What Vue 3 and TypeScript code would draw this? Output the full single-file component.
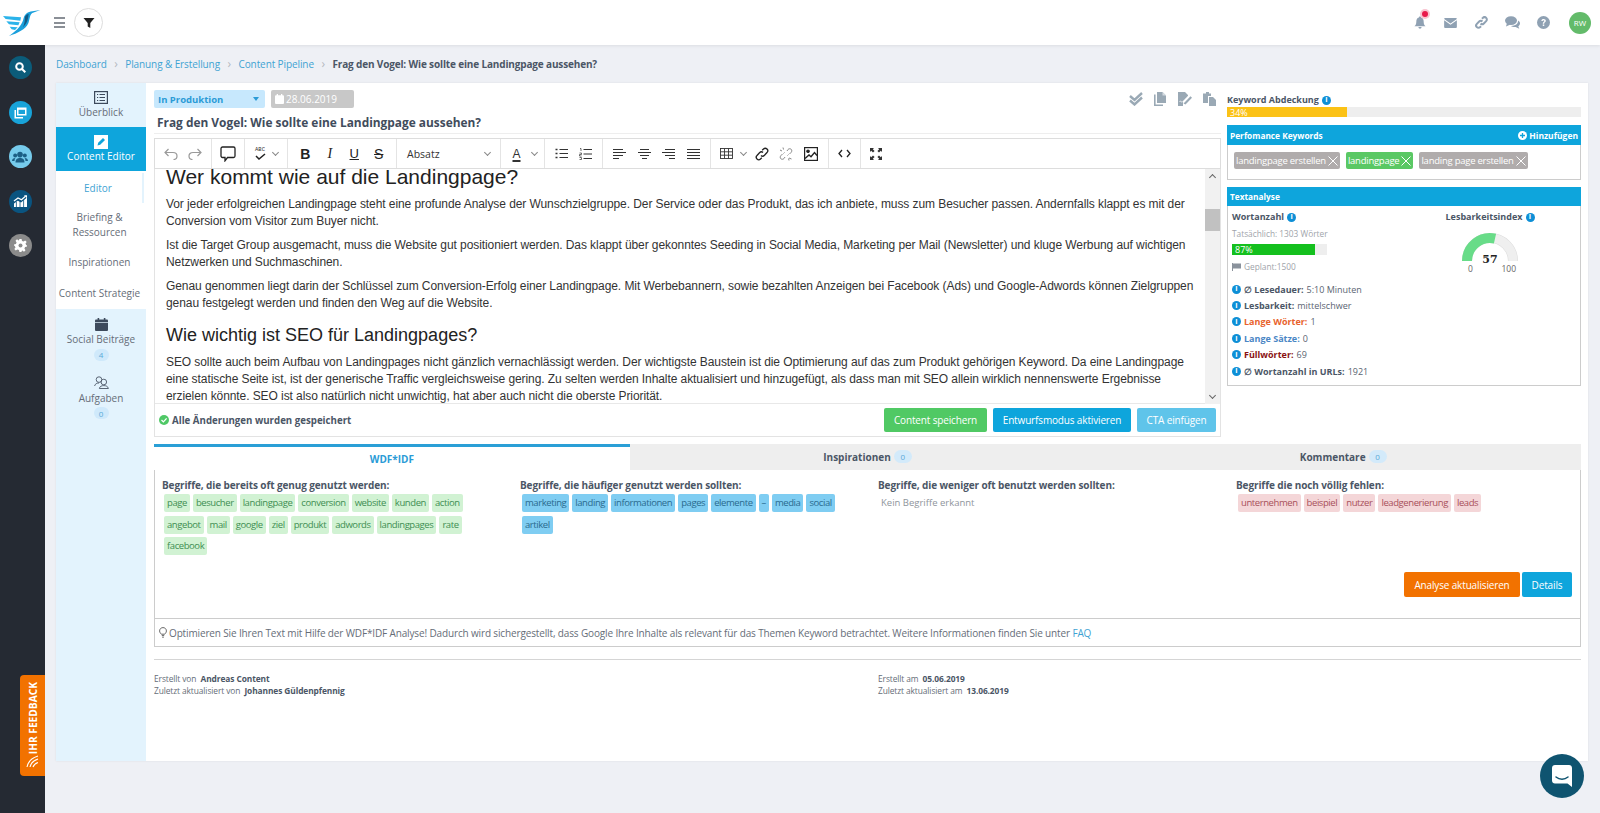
<script setup lang="ts">
const greenTags: string[] = ['page','besucher','landingpage','conversion','website','kunden','action','angebot','mail','google','ziel','produkt','adwords','landingpages','rate','facebook']
const blueTags: string[] = ['marketing','landing','informationen','pages','elemente','–','media','social','artikel']
const redTags: string[] = ['unternehmen','beispiel','nutzer','leadgenerierung','leads']
const stats = [
  { label: '∅ Lesedauer:', value: '5:10 Minuten', cls: 'st-dark' },
  { label: 'Lesbarkeit:', value: 'mittelschwer', cls: 'st-dark' },
  { label: 'Lange Wörter:', value: '1', cls: 'st-orange' },
  { label: 'Lange Sätze:', value: '0', cls: 'st-blue' },
  { label: 'Füllwörter:', value: '69', cls: 'st-red' },
  { label: '∅ Wortanzahl in URLs:', value: '1921', cls: 'st-dark' },
]
const keywords = [
  { t: 'landingpage erstellen', green: false },
  { t: 'landingpage', green: true },
  { t: 'landing page erstellen', green: false },
]
</script>

<template>
  <div class="app">
    <header class="topbar">
      <svg class="logo" width="38" height="27" viewBox="0 0 114 81">
        <path d="M112 0 L88 4 C74 6 66 12 62 24 C58 44 44 60 18 78 C44 70 68 58 76 40 C80 30 80 14 88 9 Z" fill="#1aa0dc"/>
        <path d="M0 18 L54 22 L52 32 L8 27 Z M10 34 L50 37 L46 46 L18 43 Z M20 50 L44 52 L36 60 L26 58 Z" fill="#2bb3ea"/>
        <path d="M66 20 C70 14 74 12 77 12 C75 22 76 36 60 52 C65 40 66 30 66 20 Z" fill="#135a84"/>
      </svg>
      <div class="burger"><i></i><i></i><i></i></div>
      <div class="filter-btn">
        <svg width="12" height="12" viewBox="0 0 12 12"><path d="M0.5 1 H11.5 L7.3 6 V11 L4.7 9.5 V6 Z" fill="#222"/></svg>
      </div>
      <div class="top-right">
        <div class="ti bell">
          <svg width="12" height="13" viewBox="0 0 14 15"><path d="M7 0.5 C8 .5 8.3 1.2 8.3 1.8 C10.5 2.4 11.3 4.4 11.3 6.5 C11.3 9 12 10.4 13.5 11.8 H.5 C2 10.4 2.7 9 2.7 6.5 C2.7 4.4 3.5 2.4 5.7 1.8 C5.7 1.2 6 .5 7 .5 Z M5.2 12.8 H8.8 C8.8 14 8 14.8 7 14.8 C6 14.8 5.2 14 5.2 12.8 Z" fill="#8fa1b3"/></svg>
          <span class="pulse"></span>
        </div>
        <div class="ti"><svg width="13" height="10" viewBox="0 0 14 11"><path d="M0 1 C0 .4 .4 0 1 0 H13 C13.6 0 14 .4 14 1 L7 6 Z M0 2.6 L7 7.5 L14 2.6 V10 C14 10.6 13.6 11 13 11 H1 C.4 11 0 10.6 0 10 Z" fill="#8fa1b3"/></svg></div>
        <div class="ti"><svg width="13" height="13" viewBox="0 0 14 14" fill="none" stroke="#8fa1b3" stroke-width="2.2"><path d="M6 8 C7 9 8.5 9 9.5 8 L12 5.5 C13 4.5 13 3 12 2 C11 1 9.5 1 8.5 2 L7.5 3"/><path d="M8 6 C7 5 5.5 5 4.5 6 L2 8.5 C1 9.5 1 11 2 12 C3 13 4.5 13 5.5 12 L6.5 11"/></svg></div>
        <div class="ti"><svg width="15" height="13" viewBox="0 0 15 13"><ellipse cx="6" cy="4.6" rx="6" ry="4.4" fill="#8fa1b3"/><path d="M2 7 L1 10.5 L5.5 8.5 Z" fill="#8fa1b3"/><path d="M13 4.6 C14.4 5.4 15 6.4 15 7.5 C15 8.7 14.2 9.6 13.3 10.2 L14.3 12.8 L10.6 11 C8.8 11.2 7 10.6 6 9.9 C10 10 13.4 8 13 4.6 Z" fill="#8fa1b3"/></svg></div>
        <div class="ti"><svg width="13" height="13" viewBox="0 0 14 14"><circle cx="7" cy="7" r="7" fill="#8fa1b3"/><path d="M4.7 5.3 C4.8 3.9 5.8 3.2 7.1 3.2 C8.5 3.2 9.5 4 9.5 5.2 C9.5 6.8 7.7 6.8 7.7 8.3 H6.2 C6.2 6.2 7.9 6.2 7.9 5.3 C7.9 4.8 7.5 4.5 7 4.5 C6.5 4.5 6.2 4.9 6.1 5.5 Z" fill="#fff"/><rect x="6.2" y="9.1" width="1.6" height="1.6" fill="#fff"/></svg></div>
        <div class="avatar">RW</div>
      </div>
    </header>

    <div class="below">
      <aside class="rail">
        <div class="rail-ic" style="background:#0b5c7a">
          <svg width="11" height="11" viewBox="0 0 11 11" fill="none" stroke="#fff" stroke-width="2"><circle cx="4.5" cy="4.5" r="3.3"/><path d="M7 7 L10.3 10.3"/></svg>
        </div>
        <div class="rail-ic" style="background:#18a3d9">
          <svg width="13" height="13" viewBox="0 0 13 13"><path d="M3 1.5 H12.5 V9.5 H3 Z" fill="#fff"/><rect x="4.5" y="3.8" width="6.5" height="4.2" fill="#18a3d9"/><path d="M.5 4 H2 V11 H9 V12.5 H.5 Z" fill="#fff"/></svg>
        </div>
        <div class="rail-ic" style="background:#76cbec">
          <svg width="16" height="12" viewBox="0 0 16 12" fill="#1c5f85"><circle cx="8" cy="3.6" r="2.8"/><circle cx="3.2" cy="4.4" r="2"/><circle cx="12.8" cy="4.4" r="2"/><path d="M3.5 11.5 C3.5 8 5.5 7 8 7 C10.5 7 12.5 8 12.5 11.5 Z"/><path d="M0 10 C0 8 1.3 7 3.4 7 C2.8 8 2.5 9 2.5 10 Z M16 10 C16 8 14.7 7 12.6 7 C13.2 8 13.5 9 13.5 10 Z"/></svg>
        </div>
        <div class="rail-ic" style="background:#0a5480">
          <svg width="15" height="12" viewBox="0 0 15 12" fill="#fff"><path d="M1 12 V8.5 L4.8 5.8 L8 7.5 L11 5 L14 2.5 V12 Z"/><path d="M1 6 L5 3 L8.5 4.8 L12.5 1.3" fill="none" stroke="#fff" stroke-width="1.3"/><path d="M11 .3 H14 V3.3 Z"/><path d="M3.4 7 V12 M7 6 V12 M10.6 5 V12" stroke="#0a5480" stroke-width=".8"/></svg>
        </div>
        <div class="rail-ic" style="background:#8b8b8b">
          <svg width="13" height="13" viewBox="0 0 13 13"><path d="M5.4 0 H7.6 L8 1.9 L9.6 2.6 L11.2 1.5 L12.7 3 L11.5 4.6 L12.2 6 L13 6.4 V7.6 L11.1 8.1 L10.4 9.6 L11.5 11.2 L10 12.7 L8.4 11.5 L7.6 11.9 V13 H5.4 L5 11.1 L3.4 10.4 L1.8 11.5 L.3 10 L1.5 8.4 L.8 7 L0 6.6 V5.4 L1.9 5 L2.6 3.4 L1.5 1.8 L3 .3 L4.6 1.5 L5 1.3 Z" fill="#fff"/><circle cx="6.5" cy="6.5" r="2" fill="#8b8b8b"/></svg>
        </div>
        <div class="feedback">
          <span class="fb-text">IHR FEEDBACK</span>
          <svg class="fb-ic" width="13" height="13" viewBox="0 0 13 13" fill="none" stroke="#fff" stroke-width="1.1"><path d="M1 12 C2 7 5 3 12 1"/><path d="M4 12 C4.5 9 6.5 6 12 4"/><path d="M7 12 C7.5 10.5 9 8.5 12 7.5"/></svg>
        </div>
      </aside>

      <main class="main">
        <nav class="crumbs">
          <a>Dashboard</a><span class="sep">›</span>
          <a>Planung &amp; Erstellung</a><span class="sep">›</span>
          <a>Content Pipeline</a><span class="sep">›</span>
          <b>Frag den Vogel: Wie sollte eine Landingpage aussehen?</b>
        </nav>

        <section class="card">
          <div class="side">
            <div class="side-item tint ov">
              <svg width="14" height="13" viewBox="0 0 14 13" fill="none" stroke="#3d4a5c" stroke-width="1.2"><rect x=".6" y=".6" width="12.8" height="11.8"/><path d="M3 3.5 H4.2 M5.5 3.5 H11 M3 6.5 H4.2 M5.5 6.5 H11 M3 9.5 H4.2 M5.5 9.5 H11"/></svg>
              <span>Überblick</span>
            </div>
            <div class="side-item active">
              <svg width="14" height="14" viewBox="0 0 14 14"><rect width="14" height="14" fill="#fff"/><path d="M3.5 10.5 L4.2 7.8 L9 3 L11 5 L6.2 9.8 Z" fill="#0ea5dc"/></svg>
              <span>Content Editor</span>
            </div>
            <div class="sub">
              <div class="sub-i cur">Editor</div>
              <div class="sub-i two">Briefing &amp;<br>Ressourcen</div>
              <div class="sub-i insp">Inspirationen</div>
              <div class="sub-i strat">Content Strategie</div>
            </div>
            <div class="side-rest">
              <div class="side-item soc">
                <svg width="13" height="13" viewBox="0 0 13 13" fill="#3d4a5c"><rect x="0" y="1.5" width="13" height="11.5" rx="1"/><rect x="2.6" y="0" width="1.6" height="3"/><rect x="8.8" y="0" width="1.6" height="3"/><rect x="0" y="4" width="13" height=".7" fill="#e3f3fd"/></svg>
                <span>Social Beiträge</span>
                <em class="pill">4</em>
              </div>
              <div class="side-item soc tasks">
                <svg width="15" height="13" viewBox="0 0 15 13" fill="none" stroke="#4b5666" stroke-width=".9"><circle cx="5" cy="3.6" r="2.8"/><path d="M.6 10 C1 7.8 3 7 5 7"/><circle cx="9.8" cy="6" r="2.8"/><path d="M5.4 12.5 C5.6 10.4 7.6 9.6 9.8 9.6 C12 9.6 14 10.4 14.4 12.5 Z"/></svg>
                <span>Aufgaben</span>
                <em class="pill">0</em>
              </div>
            </div>
          </div>

          <div class="body">
            <div class="top-grid">
              <div class="ed-col">
                <div class="status-row">
                  <div class="status">In Produktion<i class="caret"></i></div>
                  <div class="date">
                    <svg width="9" height="10" viewBox="0 0 9 10" fill="#fff"><rect y="1.2" width="9" height="8.8" rx="1"/><rect x="1.7" width="1.3" height="2"/><rect x="6" width="1.3" height="2"/></svg>
                    28.06.2019
                  </div>
                  <div class="actions">
                    <svg width="16" height="14" viewBox="0 0 16 14" fill="none" stroke="#9aa9b5" stroke-width="2.4"><path d="M2 4 L6.5 8 L14 1"/><path d="M2 8.5 L6.5 12.5 L14 5.5"/></svg>
                    <svg width="13" height="14" viewBox="0 0 13 14" fill="#9aa9b5"><path d="M3 0 H8.5 L12 3.5 V11 H3 Z"/><path d="M1.6 2.5 V12.4 H9 V14 H0 V2.5 Z"/><path d="M8.5 0 V3.5 H12 Z" fill="#d5dce2"/></svg>
                    <svg width="16" height="14" viewBox="0 0 16 14"><path d="M1 0 H8 L11 3 V6 L6 11 V14 H1 Z" fill="#9aa9b5"/><path d="M6.5 11 L13.5 3.8" stroke="#fff" stroke-width="3.4"/><path d="M6.5 11.5 L13.5 4.3 L15 5.8 L8.5 12.5 Z" fill="#9aa9b5"/><path d="M2.5 9.5 C3.5 8 4 11 5 9.5" stroke="#fff" fill="none" stroke-width=".8"/></svg>
                    <svg width="13" height="14" viewBox="0 0 13 14" fill="#9aa9b5"><path d="M0 1.5 H3 V0 H6 V1.5 H8 V4 H5 V11 H0 Z"/><path d="M6 5 H10 L13 8 V14 H6 Z"/></svg>
                  </div>
                </div>
                <h1 class="title">Frag den Vogel: Wie sollte eine Landingpage aussehen?</h1>
                <div class="editor-box">
                  <div class="toolbar">
                    <div class="grp" style="width:57px">
                      <button class="tb"><svg width="14" height="12" viewBox="0 0 14 12" fill="none" stroke="#9a9a9a" stroke-width="1.2"><path d="M4.5 1 L1 4.5 L4.5 8"/><path d="M1 4.5 H9 C11.5 4.5 13 6 13 8 C13 10 11.5 11.5 9.5 11.5"/></svg></button>
                      <button class="tb"><svg width="14" height="12" viewBox="0 0 14 12" fill="none" stroke="#9a9a9a" stroke-width="1.2"><path d="M9.5 1 L13 4.5 L9.5 8"/><path d="M13 4.5 H5 C2.5 4.5 1 6 1 8 C1 10 2.5 11.5 4.5 11.5"/></svg></button>
                    </div>
                    <div class="grp" style="width:33px">
                      <button class="tb"><svg width="16" height="16" viewBox="0 0 16 16" fill="none" stroke="#222" stroke-width="1.3"><path d="M2.5 1 H13.5 C14.3 1 15 1.7 15 2.5 V10 C15 10.8 14.3 11.5 13.5 11.5 H7.5 L5 14.8 V11.5 H2.5 C1.7 11.5 1 10.8 1 10 V2.5 C1 1.7 1.7 1 2.5 1 Z"/></svg></button>
                    </div>
                    <div class="grp" style="width:43px">
                      <button class="tb spell"><span>ABC</span><svg width="11" height="7" viewBox="0 0 11 7" fill="none" stroke="#222" stroke-width="1.5"><path d="M1 3 L4 6 L10 1"/></svg></button>
                      <i class="chev"></i>
                    </div>
                    <div class="grp" style="width:109px">
                      <button class="tb fm b">B</button><button class="tb fm it">I</button><button class="tb fm u">U</button><button class="tb fm s">S</button>
                    </div>
                    <div class="grp absatz" style="width:104px"><span>Absatz</span><i class="chev"></i></div>
                    <div class="grp" style="width:44px">
                      <button class="tb fm acol">A</button><i class="chev"></i>
                    </div>
                    <div class="grp" style="width:58px">
                      <button class="tb"><svg width="13" height="11" viewBox="0 0 13 11" stroke="#333" stroke-width="1.1"><path d="M4.5 1.5 H13 M4.5 5.5 H13 M4.5 9.5 H13"/><path d="M.5 1.5 H2.5 M.5 5.5 H2.5 M.5 9.5 H2.5" stroke-width="1.6"/></svg></button>
                      <button class="tb"><svg width="13" height="12" viewBox="0 0 13 12" stroke="#333" stroke-width="1.1"><path d="M4.5 1.5 H13 M4.5 6 H13 M4.5 10.5 H13"/><path d="M1 .5 H2 V3 M.5 5 H2.5 V6.5 H.5 V8 H2.5 M.5 9.5 H2.5 V11.5 H.5" fill="none" stroke-width=".7"/></svg></button>
                    </div>
                    <div class="grp" style="width:107.5px">
                      <button class="tb" v-for="(a,i) in ['M0 1.5H10M0 4.5H13M0 7.5H10M0 10.5H6','M2 1.5H11M0 4.5H13M2 7.5H11M4 10.5H9','M3 1.5H13M0 4.5H13M3 7.5H13M7 10.5H13','M0 1.5H13M0 4.5H13M0 7.5H13M0 10.5H13']" :key="i"><svg width="13" height="12" viewBox="0 0 13 12" stroke="#333" stroke-width="1.2"><path :d="a"/></svg></button>
                    </div>
                    <div class="grp" style="width:118.5px">
                      <button class="tb narrow"><svg width="13" height="11" viewBox="0 0 13 11" fill="none" stroke="#333" stroke-width=".9"><rect x=".5" y=".5" width="12" height="10"/><path d="M.5 3.8 H12.5 M.5 7.2 H12.5 M4.5 .5 V10.5 M8.5 .5 V10.5"/></svg></button>
                      <i class="chev"></i>
                      <button class="tb"><svg width="14" height="14" viewBox="0 0 14 14" fill="none" stroke="#222" stroke-width="1.3"><path d="M6 8.5 C7 9.5 8.5 9.3 9.5 8.3 L12 5.5 C13 4.5 13 3 12 2 C11 1 9.5 1 8.5 2 L7.2 3.3"/><path d="M8 5.5 C7 4.5 5.5 4.7 4.5 5.7 L2 8.5 C1 9.5 1 11 2 12 C3 13 4.5 13 5.5 12 L6.8 10.7"/></svg></button>
                      <button class="tb"><svg width="14" height="14" viewBox="0 0 14 14" fill="none" stroke="#888" stroke-width="1"><path d="M8 4 L9 2.5 C10 1.5 11.3 1.5 12.2 2.3 C13 3.2 13 4.5 12 5.5 L10.5 7"/><path d="M6 10 L5 11.5 C4 12.5 2.7 12.5 1.8 11.7 C1 10.8 1 9.5 2 8.5 L3.5 7"/><path d="M5.5 5.5 L4.5 6.5 M8.5 8.5 L9.5 7.5 M1 3 L3 4 M4 .5 L4.5 2.5 M10 11 L12.5 12 M9.5 11.5 L10 13.5"/></svg></button>
                      <button class="tb"><svg width="14" height="14" viewBox="0 0 14 14" fill="none" stroke="#222" stroke-width="1.2"><rect x=".6" y=".6" width="12.8" height="12.8"/><circle cx="4" cy="4.2" r="1.2" fill="#222"/><path d="M1 11.5 L5 8 L7 9.8 L10.5 5.5 L13 8.5" stroke-width="1.4"/></svg></button>
                    </div>
                    <div class="grp" style="width:32px">
                      <button class="tb"><svg width="13" height="9" viewBox="0 0 13 9" fill="none" stroke="#222" stroke-width="1.3"><path d="M4 1 L1 4.5 L4 8"/><path d="M9 1 L12 4.5 L9 8"/></svg></button>
                    </div>
                    <div class="grp last">
                      <button class="tb"><svg width="12" height="12" viewBox="0 0 12 12" fill="#333"><path d="M0 0 H4 L2.8 1.2 L4.6 3 L3 4.6 L1.2 2.8 L0 4 Z M12 0 V4 L10.8 2.8 L9 4.6 L7.4 3 L9.2 1.2 L8 0 Z M0 12 V8 L1.2 9.2 L3 7.4 L4.6 9 L2.8 10.8 L4 12 Z M12 12 H8 L9.2 10.8 L7.4 9 L9 7.4 L10.8 9.2 L12 8 Z"/></svg></button>
                    </div>
                  </div>
                  <div class="doc-wrap">
                    <div class="doc">
                      <h2 class="h-a">Wer kommt wie auf die Landingpage?</h2>
                      <p>Vor jeder erfolgreichen Landingpage steht eine profunde Analyse der Wunschzielgruppe. Der Service oder das Produkt, das ich anbiete, muss zum Besucher passen. Andernfalls klappt es mit der Conversion vom Visitor zum Buyer nicht.</p>
                      <p>Ist die Target Group ausgemacht, muss die Website gut positioniert werden. Das klappt über gekonntes Seeding in Social Media, Marketing per Mail (Newsletter) und kluge Werbung auf wichtigen Netzwerken und Suchmaschinen.</p>
                      <p>Genau genommen liegt darin der Schlüssel zum Conversion-Erfolg einer Landingpage. Mit Werbebannern, sowie bezahlten Anzeigen bei Facebook (Ads) und Google-Adwords können Zielgruppen genau festgelegt werden und finden den Weg auf die Website.</p>
                      <h3 class="h-b">Wie wichtig ist SEO für Landingpages?</h3>
                      <p>SEO sollte auch beim Aufbau von Landingpages nicht gänzlich vernachlässigt werden. Der wichtigste Baustein ist die Optimierung auf das zum Produkt gehörigen Keyword. Da eine Landingpage eine statische Seite ist, ist der generische Traffic vergleichsweise gering. Zu selten werden Inhalte aktualisiert und hinzugefügt, als dass man mit SEO allein wirklich nennenswerte Ergebnisse erzielen könnte. SEO ist also natürlich nicht unwichtig, hat aber auch nicht die oberste Priorität.</p>
                    </div>
                    <div class="scroll">
                      <i class="sb-up"></i><div class="thumb"></div><i class="sb-down"></i>
                    </div>
                  </div>
                  <div class="save-row">
                    <span class="saved">
                      <svg width="10" height="10" viewBox="0 0 10 10"><circle cx="5" cy="5" r="5" fill="#4fc866"/><path d="M2.5 5 L4.4 6.9 L7.6 3.4" fill="none" stroke="#fff" stroke-width="1.3"/></svg>
                      Alle Änderungen wurden gespeichert
                    </span>
                    <button class="btn b-green">Content speichern</button>
                    <button class="btn b-blue">Entwurfsmodus aktivieren</button>
                    <button class="btn b-light">CTA einfügen</button>
                  </div>
                </div>
              </div>

              <div class="right-col">
                <div class="lab">Keyword Abdeckung <i class="info">i</i></div>
                <div class="bar big"><div class="fill yellow">34%</div></div>
                <div class="box perf">
                  <div class="box-h"><span>Perfomance Keywords</span><span class="add"><svg width="9" height="9" viewBox="0 0 9 9"><circle cx="4.5" cy="4.5" r="4.5" fill="#fff"/><path d="M4.5 2 V7 M2 4.5 H7" stroke="#0ea5dc" stroke-width="1.3"/></svg> Hinzufügen</span></div>
                  <div class="kw-row">
                    <span v-for="k in keywords" :key="k.t" class="kw" :class="{ on: k.green }">{{ k.t }}<svg width="10" height="10" viewBox="0 0 10 10" stroke="#fff" stroke-width="1"><path d="M.5 .5 L9.5 9.5 M9.5 .5 L.5 9.5"/></svg></span>
                  </div>
                </div>
                <div class="box ta">
                  <div class="box-h tall"><span>Textanalyse</span></div>
                  <div class="ta-body">
                    <div class="ta-cols">
                      <div>
                        <div class="lab small">Wortanzahl <i class="info">i</i></div>
                        <div class="muted t1">Tatsächlich: 1303 Wörter</div>
                        <div class="bar words"><div class="fill lime">87%</div></div>
                        <div class="muted planned">
                          <svg width="9" height="8" viewBox="0 0 9 8" fill="#8a929c"><path d="M0 0 H1 V8 H0 Z M1 .5 H9 V5.5 H1 Z"/></svg>
                          Geplant:1500
                        </div>
                      </div>
                      <div class="gauge-col">
                        <div class="lab small">Lesbarkeitsindex <i class="info">i</i></div>
                        <svg class="gauge" width="60" height="36" viewBox="0 0 60 36">
                          <path d="M7 29 A23 23 0 0 1 53 29" fill="none" stroke="#dcdcdc" stroke-width="10"/>
                          <path d="M7 29 A23 23 0 0 1 53 29" fill="none" stroke="#efefef" stroke-width="9"/>
                          <path d="M7 29 A23 23 0 0 1 35 6.6" fill="none" stroke="#68dc88" stroke-width="10"/>
                          <text x="30" y="30.5" text-anchor="middle" class="g-num">57</text>
                        </svg>
                        <div class="g-scale"><span>0</span><span>100</span></div>
                      </div>
                    </div>
                    <ul class="stats">
                      <li v-for="s in stats" :key="s.label"><i class="info">i</i><b :class="s.cls">{{ s.label }}</b> {{ s.value }}</li>
                    </ul>
                  </div>
                </div>
              </div>
            </div>

            <div class="tabs">
              <div class="tab on">WDF*IDF</div>
              <div class="tab">Inspirationen <em class="pill">0</em></div>
              <div class="tab">Kommentare <em class="pill">0</em></div>
            </div>
            <div class="panel">
              <div class="panel-main">
                <div class="cols">
                  <div class="col">
                    <h4>Begriffe, die bereits oft genug genutzt werden:</h4>
                    <div class="tags"><span v-for="t in greenTags" :key="t" class="tag g">{{ t }}</span></div>
                  </div>
                  <div class="col">
                    <h4>Begriffe, die häufiger genutzt werden sollten:</h4>
                    <div class="tags"><span v-for="t in blueTags" :key="t" class="tag bl">{{ t }}</span></div>
                  </div>
                  <div class="col">
                    <h4>Begriffe, die weniger oft benutzt werden sollten:</h4>
                    <div class="none">Kein Begriffe erkannt</div>
                  </div>
                  <div class="col">
                    <h4>Begriffe die noch völlig fehlen:</h4>
                    <div class="tags"><span v-for="t in redTags" :key="t" class="tag r">{{ t }}</span></div>
                  </div>
                </div>
                <div class="panel-btns">
                  <button class="btn b-orange">Analyse aktualisieren</button>
                  <button class="btn b-blue">Details</button>
                </div>
              </div>
              <div class="hint">
                <svg width="8" height="11" viewBox="0 0 8 11" fill="none" stroke="#555" stroke-width=".9"><path d="M2.3 7.2 C1.5 6.2 .6 5.4 .6 3.9 C.6 2 2.1 .6 4 .6 C5.9 .6 7.4 2 7.4 3.9 C7.4 5.4 6.5 6.2 5.7 7.2 Z"/><path d="M2.8 8.6 H5.2 M3.2 10.2 H4.8"/></svg>
                <span>Optimieren Sie Ihren Text mit Hilfe der WDF*IDF Analyse! Dadurch wird sichergestellt, dass Google Ihre Inhalte als relevant für das Themen Keyword betrachtet. Weitere Informationen finden Sie unter <a>FAQ</a></span>
              </div>
            </div>
            <div class="credits">
              <div>Erstellt von&nbsp; <b>Andreas Content</b><br>Zuletzt aktualisiert von&nbsp; <b>Johannes Güldenpfennig</b></div>
              <div>Erstellt am&nbsp; <b>05.06.2019</b><br>Zuletzt aktualisiert am&nbsp; <b>13.06.2019</b></div>
            </div>
          </div>
        </section>
      </main>
    </div>

    <div class="chat">
      <svg width="20" height="22" viewBox="0 0 20 22"><path d="M3 0 H17 C18.7 0 20 1.3 20 3 V22 L15.5 18.5 H3 C1.3 18.5 0 17.2 0 15.5 V3 C0 1.3 1.3 0 3 0 Z" fill="#fff"/><path d="M4 12 C7.5 15 12.5 15 16 12" fill="none" stroke="#0f5470" stroke-width="1.5" stroke-linecap="round"/></svg>
    </div>
  </div>
</template>

<style>
html, body { margin: 0; background: #eef0f5; overflow: hidden; }
</style>

<style scoped>
* { box-sizing: border-box; }
.app { width: 1600px; height: 813px; display: flex; flex-direction: column; position: relative; font-family: "Open Sans", sans-serif; color: #4b5666; font-size: 10px; }
.topbar { height: 45px; background: #fff; display: flex; align-items: center; padding-left: 3px; box-shadow: 0 1px 3px rgba(0,0,0,.08); position: relative; z-index: 2; flex: none; }
.logo { flex: none; margin-top: 2px; }
.burger { display: flex; flex-direction: column; gap: 2.5px; width: 11px; margin-left: 13px; }
.burger i { height: 2px; background: #8a8f96; display: block; }
.filter-btn { width: 29px; height: 29px; border: 1px solid #ddd; border-radius: 50%; display: flex; align-items: center; justify-content: center; margin-left: 9px; }
.top-right { margin-left: auto; display: flex; align-items: center; padding-right: 9px; }
.ti { width: 31px; display: flex; justify-content: center; position: relative; }
.pulse { position: absolute; left: 17.5px; top: -5px; width: 6px; height: 6px; border-radius: 50%; background: #e8194b; box-shadow: 0 0 0 2px #f9c4d0; }
.avatar { width: 22px; height: 22px; border-radius: 50%; background: #63bb6a; color: #fff; font-size: 8px; display: flex; align-items: center; justify-content: center; margin-left: 10px; }

.below { flex: 1; display: flex; min-height: 0; }
.rail { width: 45px; background: #252a33; flex: none; display: flex; flex-direction: column; align-items: flex-start; padding: 11px 0 0 8.5px; gap: 21.5px; position: relative; }
.rail-ic { width: 23px; height: 23px; border-radius: 50%; display: flex; align-items: center; justify-content: center; }
.feedback { position: absolute; left: 20px; top: 630px; width: 25px; height: 101px; background: #f27200; border-radius: 4px 0 0 4px; display: flex; flex-direction: column; align-items: center; justify-content: flex-end; padding-bottom: 8px; gap: 1px; }
.fb-text { writing-mode: vertical-rl; transform: rotate(180deg); color: #fff; font-weight: 700; font-size: 10.2px; white-space: nowrap; }
.fb-ic { flex: none; }

.main { flex: 1; padding-left: 11px; padding-right: 12px; min-width: 0; }
.crumbs { height: 38px; display: flex; align-items: center; font-size: 10px; color: #3ca1d1; letter-spacing: -.1px; }
.crumbs a { color: #3fa3d3; }
.crumbs b { color: #4b5666; font-weight: 700; font-size: 10px; letter-spacing: -.15px; }
.sep { color: #b5b9bf; margin: 0 7.5px; font-size: 12px; line-height: 1; }
.card { height: 678px; background: #fff; display: flex; box-shadow: 0 0 2px rgba(0,0,0,.08); }
.side { width: 90px; flex: none; display: flex; flex-direction: column; text-align: center; color: #666d78; font-size: 10px; }
.side-item { display: flex; flex-direction: column; align-items: center; }
.side-item span { line-height: 14px; }
.tint { background: #e3f3fd; }
.ov { height: 44px; padding-top: 8px; gap: 1px; }
.active { height: 44px; background: #0ea5dc; color: #fff; padding-top: 8px; gap: 0; }
.sub { height: 138px; position: relative; padding-top: 2px; }
.sub-i { display: flex; align-items: center; justify-content: center; line-height: 15px; padding-right: 3px; font-size: 10px; }
.sub-i.cur { color: #3fa3d3; height: 30px; border-right: 2px solid #e3f3fd; margin-right: 2px; padding-right: 2px; }
.sub-i.two { height: 44px; }
.sub-i.insp { height: 30px; }
.sub-i.strat { height: 32px; }
.side-rest { flex: 1; background: #e3f3fd; padding-top: 8.5px; }
.soc { padding-bottom: 15.5px; gap: 1.5px; }
.tasks { padding-bottom: 0; }
.pill { display: inline-flex; align-items: center; justify-content: center; width: 15px; height: 12px; border-radius: 8px; background: #cfe9fb; color: #5aa9d8; font-size: 8px; font-style: normal; font-weight: 400; margin-top: 1px; }

.body { flex: 1; min-width: 0; padding: 7px 7px 0 8px; display: flex; flex-direction: column; }
.top-grid { display: flex; gap: 6px; height: 348px; flex: none; }
.ed-col { width: 1067px; flex: none; display: flex; flex-direction: column; }
.status-row { height: 18px; display: flex; align-items: center; gap: 6px; }
.status { width: 111px; height: 18px; background: #c7e8fd; border-radius: 2px; color: #2b9bd6; font-weight: 700; font-size: 9.5px; display: flex; align-items: center; padding-left: 4px; position: relative; }
.caret { position: absolute; right: 6px; top: 7px; border: 3.5px solid transparent; border-top: 4px solid #2b9bd6; }
.date { width: 83px; height: 18px; background: #c8c8c8; border-radius: 2px; color: #fff; font-size: 10px; display: flex; align-items: center; gap: 2px; padding-left: 4px; }
.actions { margin-left: auto; display: flex; align-items: center; gap: 10px; padding-right: 5px; }
.title { margin: 0; height: 26px; line-height: 28px; font-size: 11.9px; font-weight: 700; color: #414c5c; padding-left: 3px; border-bottom: 1px solid #eee; }
.editor-box { margin-top: 4px; border: 1px solid #e3e3e3; border-top: none; height: 299px; display: flex; flex-direction: column; }
.toolbar { height: 31px; flex: none; display: flex; border: 1px solid #ddd; border-width: 1px 0; margin-left: -1px; margin-right: -1px; border-left: 1px solid #ddd; border-right: 1px solid #ddd; }
.grp { display: flex; align-items: center; justify-content: center; border-right: 1px solid #e4e4e4; flex: none; padding: 0 2px; }
.grp.last { border-right: none; padding-left: 3px; }
.tb { width: 24.5px; height: 24px; padding: 0; border: none; background: none; display: flex; align-items: center; justify-content: center; font-family: "Liberation Sans", sans-serif; color: #222; flex: none; }
.tb.narrow { width: 22px; }
.spell { flex-direction: column; gap: 0; width: 20px; }
.spell span { font-size: 5.5px; line-height: 6px; font-family: "Liberation Mono", monospace; color: #333; }
.chev { width: 5px; height: 5px; border-right: 1px solid #888; border-bottom: 1px solid #888; transform: rotate(45deg); margin: -2px 4px 0 3px; flex: none; display: block; }
.fm { font-size: 14px; }
.fm.b { font-weight: 700; }
.fm.it { font-style: italic; font-family: "Liberation Serif", serif; }
.fm.u { text-decoration: underline; font-size: 13px; }
.fm.s { text-decoration: line-through; }
.fm.acol { font-size: 12px; text-decoration: underline; text-decoration-thickness: 2px; text-underline-offset: 2px; color: #333; }
.absatz { justify-content: space-between; font-size: 10.5px; color: #333; padding: 0 6px 0 10px; }
.doc-wrap { height: 235px; flex: none; display: flex; overflow: hidden; }
.doc { flex: 1; overflow: hidden; padding: 0 10px 0 11px; font-family: "Liberation Sans", Arial, sans-serif; font-size: 12px; line-height: 17px; letter-spacing: -.08px; color: #333; }
.doc p { margin: 0 0 7px; }
.h-a { font-weight: 400; font-size: 21px; line-height: 16px; letter-spacing: 0; color: #222; margin: 0 0 11px; }
.h-b { font-weight: 400; font-size: 18px; line-height: 24px; letter-spacing: 0; color: #222; margin: 10.5px 0 7.5px; }
.scroll { width: 15px; flex: none; background: #f1f1f1; display: flex; flex-direction: column; align-items: center; position: relative; }
.thumb { position: absolute; top: 40px; left: 0; width: 15px; height: 22px; background: #c1c1c1; }
.sb-up, .sb-down { position: absolute; left: 5px; width: 5px; height: 5px; border-left: 1px solid #666; border-top: 1px solid #666; transform: rotate(45deg); }
.sb-up { top: 6px; }
.sb-down { bottom: 6px; transform: rotate(225deg); }
.save-row { flex: 1; display: flex; align-items: center; padding-right: 4px; gap: 6px; margin-top: -1px; border-top: 1px solid #e8e8e8; }
.saved { margin-right: auto; font-weight: 700; font-size: 9.7px; padding-left: 4px; display: flex; align-items: center; gap: 3px; color: #4b5666; }
.btn { border: none; color: #fff; border-radius: 2px; font-family: "Open Sans", sans-serif; font-size: 10px; height: 24px; padding: 0; letter-spacing: -.15px; }
.b-green { width: 103px; background: #50c964; }
.b-blue { width: 138px; background: #0ea5dc; }
.b-light { width: 79px; background: #5fc4ea; }
.b-orange { width: 116px; height: 25px; background: #f27200; }
.panel-btns .b-blue { width: 50px; height: 25px; }

.right-col { width: 354px; flex: none; }
.lab { font-weight: 700; font-size: 9px; color: #4b5666; height: 14px; line-height: 14px; padding-top: 3px; box-sizing: content-box; display: flex; align-items: center; gap: 3px; }
.info { display: inline-flex; width: 9px; height: 9px; border-radius: 50%; background: #0e8fd6; color: #fff; font-size: 7.5px; font-style: normal; font-weight: 700; align-items: center; justify-content: center; line-height: 1; flex: none; }
.bar { background: #eee; }
.bar.big { height: 10px; }
.fill { height: 100%; color: #fff; font-size: 9px; line-height: 11px; padding-left: 3px; }
.yellow { width: 34%; background: #fbc216; }
.lime { width: 87%; background: #14c01e; }
.box { border: 1px solid #ccc; border-top: none; }
.perf { margin-top: 8px; height: 55px; }
.box-h { height: 20px; margin: 0 -1px; background: #0ea5dc; color: #fff; font-weight: 700; font-size: 8.3px; display: flex; align-items: center; justify-content: space-between; padding: 0 3px; }
.box-h.tall { height: 19px; }
.add { display: inline-flex; align-items: center; gap: 2px; font-size: 8.5px; }
.kw-row { display: flex; gap: 6px; padding: 7px 6px; }
.kw { height: 17px; background: #b0acac; color: #fff; border-radius: 2px; font-size: 9.5px; letter-spacing: -.25px; display: inline-flex; align-items: center; gap: 2px; padding: 0 2px; white-space: nowrap; }
.kw.on { background: #5ac864; }
.ta { margin-top: 7px; height: 199px; }
.ta-body { padding: 3px 4px 0 4px; }
.ta-cols { display: grid; grid-template-columns: 173px 170px; height: 71px; }
.lab.small { padding-top: 0; height: 16px; line-height: 16px; font-size: 9px; }
.muted { color: #a0a4aa; font-size: 8.3px; }
.t1 { margin-top: 3px; height: 12px; line-height: 12px; }
.bar.words { width: 95px; height: 11px; margin-top: 4px; }
.bar.words .fill { line-height: 11px; }
.planned { margin-top: 6px; display: flex; align-items: center; gap: 3px; }
.gauge-col { display: flex; flex-direction: column; align-items: center; }
.gauge-col .lab { justify-content: center; }
.gauge { margin-top: 7px; display: block; }
.g-num { font-family: "DejaVu Serif", serif; font-size: 11px; font-weight: 700; fill: #222; }
.g-scale { width: 48px; display: flex; justify-content: space-between; font-size: 8.5px; color: #666; margin-top: -4px; margin-left: 4px; line-height: 10px; }
.stats { list-style: none; margin: 1px 0 0; padding: 0; font-size: 9px; color: #5a6472; }
.stats li { height: 16.4px; display: flex; align-items: center; gap: 3px; white-space: nowrap; }
.stats b { font-weight: 700; }
.st-dark { color: #4b5666; }
.st-orange { color: #e8622c; }
.st-blue { color: #4a86c5; }
.st-red { color: #8a1212; }

.tabs { display: grid; grid-template-columns: repeat(3, 1fr); height: 26px; margin-top: 6px; flex: none; }
.tab { background: #eee; font-size: 10px; font-weight: 700; color: #4b5666; display: flex; align-items: center; justify-content: center; gap: 3px; padding-bottom: 1px; }
.tab .pill { margin-top: 0; height: 13px; width: 18px; background: #d3eafa; }
.tab.on { background: #fff; color: #2b9bd6; border-top: 3px solid #2a9fd6; padding-bottom: 0; }
.panel { border: 1px solid #ccc; border-top: none; height: 177px; flex: none; display: flex; flex-direction: column; }
.panel-main { flex: 1; display: flex; flex-direction: column; padding: 8px 8px 0 7px; }
.cols { display: grid; grid-template-columns: repeat(4, 358px); flex: 1; }
h4 { margin: 0 0 2px; font-size: 10px; font-weight: 700; color: #4b5666; line-height: 14px; letter-spacing: -.1px; }
.tags { display: flex; flex-wrap: wrap; gap: 3.5px 3px; padding-left: 2px; width: 340px; }
.tag { height: 18px; padding: 0 3px; font-size: 9.5px; line-height: 18px; border-radius: 2px; letter-spacing: -.42px; }
.g { background: #d1f2d3; color: #3e8e52; }
.bl { background: #7fcdf2; color: #2a6a8e; }
.r { background: #f4d6d8; color: #a8505a; }
.none { font-size: 9.5px; color: #8f959c; padding-left: 3px; line-height: 18px; }
.panel-btns { display: flex; justify-content: flex-end; gap: 2px; margin-bottom: 21px; }
.hint { height: 28px; border-top: 1px solid #ccc; display: flex; align-items: center; gap: 2px; padding-left: 4px; font-size: 10px; color: #666d78; white-space: nowrap; letter-spacing: -.14px; }
.hint a { color: #3fa3d3; }
.credits { margin-top: 12px; border-top: 1px solid #d5d5d5; padding-top: 13px; display: grid; grid-template-columns: 724px 1fr; font-size: 8.4px; line-height: 12px; color: #666d78; letter-spacing: -.1px; }
.credits b { color: #4b5666; }

.chat { position: absolute; left: 1540px; top: 754px; width: 44px; height: 44px; border-radius: 50%; background: #0f5470; display: flex; align-items: center; justify-content: center; z-index: 3; }
</style>
